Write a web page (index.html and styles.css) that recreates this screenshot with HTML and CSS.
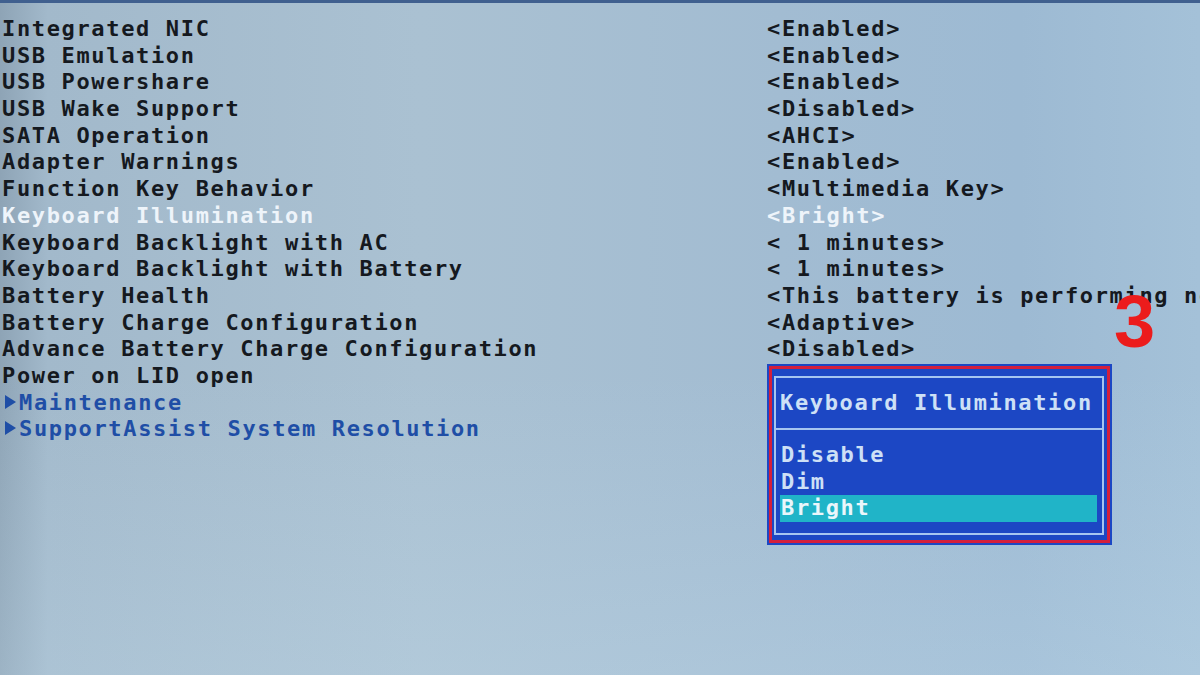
FILE: index.html
```html
<!DOCTYPE html>
<html lang="en">
<head>
    <meta charset="UTF-8">
    <title>System Configuration</title>
    <link rel="stylesheet" href="styles.css">
</head>
<body>
    <main class="setup">
        <div class="options">
            <div class="name">Integrated NIC</div><div class="value">&lt;Enabled&gt;</div>
            <div class="name">USB Emulation</div><div class="value">&lt;Enabled&gt;</div>
            <div class="name">USB Powershare</div><div class="value">&lt;Enabled&gt;</div>
            <div class="name">USB Wake Support</div><div class="value">&lt;Disabled&gt;</div>
            <div class="name">SATA Operation</div><div class="value">&lt;AHCI&gt;</div>
            <div class="name">Adapter Warnings</div><div class="value">&lt;Enabled&gt;</div>
            <div class="name">Function Key Behavior</div><div class="value">&lt;Multimedia Key&gt;</div>
            <div class="name active">Keyboard Illumination</div><div class="value active">&lt;Bright&gt;</div>
            <div class="name">Keyboard Backlight with AC</div><div class="value">&lt; 1 minutes&gt;</div>
            <div class="name">Keyboard Backlight with Battery</div><div class="value">&lt; 1 minutes&gt;</div>
            <div class="name">Battery Health</div><div class="value">&lt;This battery is performing normally&gt;</div>
            <div class="name">Battery Charge Configuration</div><div class="value">&lt;Adaptive&gt;</div>
            <div class="name">Advance Battery Charge Configuration</div><div class="value">&lt;Disabled&gt;</div>
            <div class="name">Power on LID open</div><div class="value"></div>
            <div class="name submenu"><span class="arrow"></span>Maintenance</div><div class="value"></div>
            <div class="name submenu"><span class="arrow"></span>SupportAssist System Resolution</div><div class="value"></div>
        </div>

        <!-- option picker for the selected item -->
        <div class="picker">
            <div class="picker-box">
                <div class="picker-frame">
                    <div class="picker-title">Keyboard Illumination</div>
                    <ul class="picker-list">
                        <li>Disable</li>
                        <li>Dim</li>
                        <li class="selected">Bright</li>
                    </ul>
                </div>
            </div>
        </div>

        <span class="step">3</span>
    </main>
</body>
</html>
```

FILE: styles.css
```css
html, body {
    margin: 0;
    padding: 0;
    height: 100%;
    overflow: hidden;
}

body {
    font-family: 'DejaVu Sans Mono', 'Liberation Mono', monospace;
    font-weight: bold;
    font-size: 22px;
    letter-spacing: 1.65px;
    color: #15191f;
    background:
        linear-gradient(180deg, rgba(255,255,255,0) 0%, rgba(255,255,255,0) 55%, rgba(200,225,240,0.25) 100%),
        linear-gradient(90deg, #8ea4b6 0%, #a2b9cb 4%, #aac1d2 35%, #a2bcd2 65%, #9dbad3 85%, #a4c1d8 100%);
}

.setup {
    position: relative;
    height: 100%;
    border-top: 3px solid #40608f;
    box-sizing: border-box;
    padding-top: 13px;
}

.options {
    display: grid;
    grid-template-columns: 765px 1fr;
    grid-auto-rows: 26.7px;
    line-height: 26.7px;
}

.name {
    padding-left: 2px;
    white-space: nowrap;
}

.value {
    padding-left: 2px;
    white-space: nowrap;
    overflow: hidden;
}

.active {
    color: #eef4fa;
}

.submenu {
    color: #1f4ea6;
}

.arrow {
    display: inline-block;
    width: 0;
    height: 0;
    margin: 0 3px 1px 3px;
    border-top: 7px solid transparent;
    border-bottom: 7px solid transparent;
    border-left: 11px solid #1f4ea6;
}

.picker {
    position: absolute;
    left: 767px;
    top: 361px;
    width: 345px;
    padding: 2px;
    box-sizing: border-box;
    background: #1c47c4;
}

.picker-box {
    border: 3px solid #d41f3c;
    padding: 7px 3px 5px 2px;
}

.picker-frame {
    border: 2px solid #a6c5f0;
    color: #cde0f6;
}

.picker-title {
    height: 50px;
    line-height: 50px;
    padding-left: 4px;
    border-bottom: 2px solid #a6c5f0;
    white-space: nowrap;
}

.picker-list {
    list-style: none;
    margin: 0;
    padding: 12px 5px 11px 4px;
    line-height: 26.7px;
}

.picker-list li {
    padding-left: 1px;
}

.picker-list .selected {
    background: #20b4c8;
    color: #eaf6fb;
}

.step {
    position: absolute;
    left: 1114px;
    top: 282px;
    font-family: 'Liberation Sans', Arial, sans-serif;
    font-size: 74px;
    font-weight: bold;
    letter-spacing: 0;
    color: #ec1c1c;
    line-height: 1;
}
```
